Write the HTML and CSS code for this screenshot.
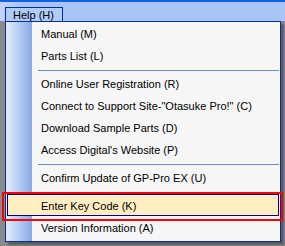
FILE: index.html
```html
<!doctype html>
<html lang="en">
<head>
    <meta charset="UTF-8">
    <title>Help Menu</title>
    <link rel="stylesheet" href="styles.css">
</head>
<body>
    <div class="menubar">
        <div class="menubar-item">Help (H)</div>
    </div>

    <div class="menu">
        <div class="item">Manual (M)</div>
        <div class="item">Parts List (L)</div>
        <div class="sep"></div>
        <div class="item">Online User Registration (R)</div>
        <div class="item">Connect to Support Site-"Otasuke Pro!" (C)</div>
        <div class="item">Download Sample Parts (D)</div>
        <div class="item">Access Digital's Website (P)</div>
        <div class="sep"></div>
        <div class="item">Confirm Update of GP-Pro EX (U)</div>
        <div class="sep"></div>
        <div class="item active">Enter Key Code (K)</div>
        <div class="item">Version Information (A)</div>
    </div>

    <!-- red annotation box -->
    <div class="mark"></div>
</body>
</html>
```

FILE: styles.css
```css
body {
    margin: 0;
    width: 285px;
    height: 246px;
    overflow: hidden;
    position: relative;
    background: #888a8e;
    font-family: "Liberation Sans", Arial, sans-serif;
    font-size: 11px;
    color: #000;
}
.menubar {
    height: 19px;
    border-top: 2px solid #1260e6;
    background: linear-gradient(to right, #c3d6f8, #a9c5f5 20px);
}
.menubar-item {
    box-sizing: border-box;
    width: 58px;
    height: 16px;
    margin: 5px 0 0 5px;
    padding-left: 7px;
    line-height: 15px;
    border: 1px solid #00309c;
    border-bottom: none;
    background: #b0cbf6;
}
.menu {
    box-sizing: border-box;
    width: 276px;
    margin-left: 5px;
    padding: 0 0 3px;
    border: 1px solid #00309c;
    background: linear-gradient(to right, #e3edfd, #87a9e8 26px, #f6f6f6 26px);
    box-shadow: 3px 3px 2px rgba(0, 0, 0, 0.35);
}
.item {
    height: 20px;
    line-height: 22px;
    margin: 0 1px;
    padding-left: 33px;
    border: 1px solid transparent;
    white-space: nowrap;
}
.item.active {
    border-color: #000080;
    background: #ffeec2;
}
.sep {
    height: 1px;
    margin: 4px 1px 1px 32px;
    background: #6a8ccb;
}
.mark {
    position: absolute;
    left: 2px;
    top: 192px;
    width: 281px;
    height: 29px;
    box-sizing: border-box;
    border: 2px solid #ff0000;
}
```
